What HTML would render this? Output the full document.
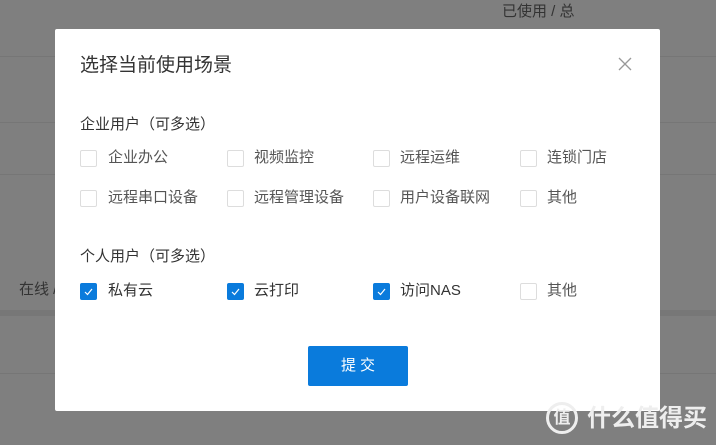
<!DOCTYPE html>
<html><head><meta charset="utf-8"><style>
*{margin:0;padding:0;box-sizing:border-box}
body{width:716px;height:445px;background:#7f7f7f;position:relative;overflow:hidden;font-family:"Liberation Sans","Noto Sans CJK SC",sans-serif;color:#333}
.abs{position:absolute;white-space:nowrap}
.line{position:absolute;left:0;width:716px;height:1px;background:#767676}
.modal{position:absolute;left:55px;top:29px;width:605px;height:382px;background:#fff;border-radius:2px}
.cb{position:absolute;width:17px;height:17px;border:1px solid #ddd;border-radius:2px;background:#fff}
.cb.on{background:#0a7bdc;border-color:#0a7bdc}
.lbl{position:absolute;font-size:15px;color:#555;line-height:18px;white-space:nowrap}
</style></head><body>
<div class="abs" style="left:502px;top:0px;font-size:15px;color:#333">已使用 / 总</div>
<div class="line" style="top:56px"></div>
<div class="line" style="top:122px"></div>
<div class="line" style="top:174px"></div>
<div class="abs" style="left:0;top:310px;width:716px;height:6px;background:#777"></div>
<div class="line" style="top:373px"></div>
<div class="abs" style="left:19px;top:278px;font-size:15px;color:#333">在线 /</div>
<div class="modal">
<div class="abs" style="left:25px;top:21px;font-size:19px;color:#333">选择当前使用场景</div>
<svg class="abs" style="left:563px;top:28px" width="14" height="14"><path d="M1 1L13 13M13 1L1 13" stroke="#999" stroke-width="1.3"/></svg>
<div class="abs" style="left:25px;top:84px;font-size:15px;color:#333">企业用户（可多选）</div>
<div class="abs" style="left:25px;top:216px;font-size:15px;color:#333">个人用户（可多选）</div>
</div>
<div class="cb" style="left:80px;top:150px"></div><div class="lbl" style="left:108px;top:149px">企业办公</div>
<div class="cb" style="left:227px;top:150px"></div><div class="lbl" style="left:254px;top:149px">视频监控</div>
<div class="cb" style="left:373px;top:150px"></div><div class="lbl" style="left:400px;top:149px">远程运维</div>
<div class="cb" style="left:520px;top:150px"></div><div class="lbl" style="left:547px;top:149px">连锁门店</div>
<div class="cb" style="left:80px;top:190px"></div><div class="lbl" style="left:108px;top:189px">远程串口设备</div>
<div class="cb" style="left:227px;top:190px"></div><div class="lbl" style="left:254px;top:189px">远程管理设备</div>
<div class="cb" style="left:373px;top:190px"></div><div class="lbl" style="left:400px;top:189px">用户设备联网</div>
<div class="cb" style="left:520px;top:190px"></div><div class="lbl" style="left:547px;top:189px">其他</div>
<div class="cb on" style="left:80px;top:283px"><svg width="15" height="15" style="position:absolute;left:0;top:0"><path d="M4 8L6.5 10.5L11 5" stroke="#fff" stroke-width="1.2" fill="none"/></svg></div><div class="lbl" style="left:108px;top:282px;color:#333">私有云</div>
<div class="cb on" style="left:227px;top:283px"><svg width="15" height="15" style="position:absolute;left:0;top:0"><path d="M4 8L6.5 10.5L11 5" stroke="#fff" stroke-width="1.2" fill="none"/></svg></div><div class="lbl" style="left:254px;top:282px;color:#333">云打印</div>
<div class="cb on" style="left:373px;top:283px"><svg width="15" height="15" style="position:absolute;left:0;top:0"><path d="M4 8L6.5 10.5L11 5" stroke="#fff" stroke-width="1.2" fill="none"/></svg></div><div class="lbl" style="left:400px;top:282px;color:#333">访问NAS</div>
<div class="cb" style="left:520px;top:283px"></div><div class="lbl" style="left:547px;top:282px">其他</div>
<div class="abs" style="left:308px;top:346px;width:100px;height:40px;background:#0a7bdc;border-radius:2px;color:#fff;font-size:15px;text-align:center;line-height:40px;letter-spacing:4px;text-indent:4px">提交</div>
<div class="abs" style="left:546px;top:402px;width:32px;height:32px;border-radius:50%;border:3px solid #eee;color:#eee;font-size:17px;text-align:center;line-height:26px;font-weight:bold">值</div>
<div class="abs" style="left:587px;top:404px;font-size:24px;color:#eee;font-weight:bold;line-height:30px">什么值得买</div>
</body></html>
